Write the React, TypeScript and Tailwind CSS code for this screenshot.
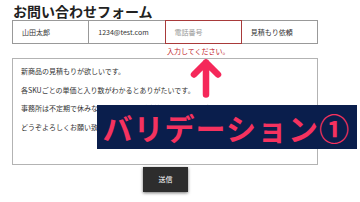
import React from 'react';

const font = { fontFamily: '"Noto Sans CJK JP", "Noto Sans", sans-serif' };

const lines = [
  '新商品の見積もりが欲しいです。',
  '各SKUごとの単価と入り数がわかるとありがたいです。',
  '事務所は不定期で休みなのでメールでご連絡いただけると助かります。',
  'どうぞよろしくお願い致します。',
];

function Field({ value, placeholder, error }: { value?: string; placeholder?: string; error?: boolean }) {
  return (
    <div
      className={`flex-1 h-[24px] flex items-center pl-[9px] text-[7px] border -ml-px first:ml-0 ${
        error ? 'border-[#a83a3a] relative z-10' : 'border-[#999999]'
      } ${value ? 'text-[#333333]' : 'text-[#9a9a9a]'}`}
    >
      {value || placeholder}
    </div>
  );
}

export default function App() {
  return (
    <div className="relative w-[360px] h-[202px] bg-white overflow-hidden" style={font}>
      <div className="w-[306px] ml-[12px] pt-[3px]">
        <h1 className="text-[14px] leading-[17px] font-bold text-[#222222] pl-px">お問い合わせフォーム</h1>

        <div className="flex">
          <Field value="山田太郎" />
          <Field value="1234@test.com" />
          <Field placeholder="電話番号" error />
          <Field value="見積もり依頼" />
        </div>
        <div className="flex">
          <div className="w-[155px]" />
          <div className="text-[7px] leading-[10px] mt-[2px] text-[#c0202a]">入力してください。</div>
        </div>

        <div className="mt-[2px] h-[107px] border border-[#b3b3b3] pt-[6px] pl-[8px] text-[7px] text-[#333333]">
          {lines.map((l, i) => (
            <div key={i} className="h-[18.7px] leading-[12px] whitespace-nowrap">
              {l}
            </div>
          ))}
        </div>

        <div className="flex justify-center mt-[2px]">
          <button className="w-[45px] h-[25px] bg-[#2d2d2d] text-white text-[7px] shadow-[0_1px_3px_rgba(0,0,0,0.55)] ml-[1px]">
            送信
          </button>
        </div>
      </div>

      {/* annotation overlay */}
      <svg className="absolute left-[188px] top-[55px]" width="36" height="46" viewBox="0 0 36 46">
        <path
          d="M18 7.5 L18 39.5 M6 19.5 L18 7.5 L30 19.5"
          stroke="#f5285a"
          strokeWidth="6.5"
          strokeLinecap="round"
          strokeLinejoin="round"
          fill="none"
        />
      </svg>
      <div className="absolute left-[96.5px] top-[105px] w-[260px] h-[44px] bg-[#0a1e4c] flex items-center pl-[6px]">
        <span className="text-[30px] leading-none font-bold tracking-[1px] text-[#f5325f] whitespace-nowrap">
          バリデーション①
        </span>
      </div>
    </div>
  );
}
